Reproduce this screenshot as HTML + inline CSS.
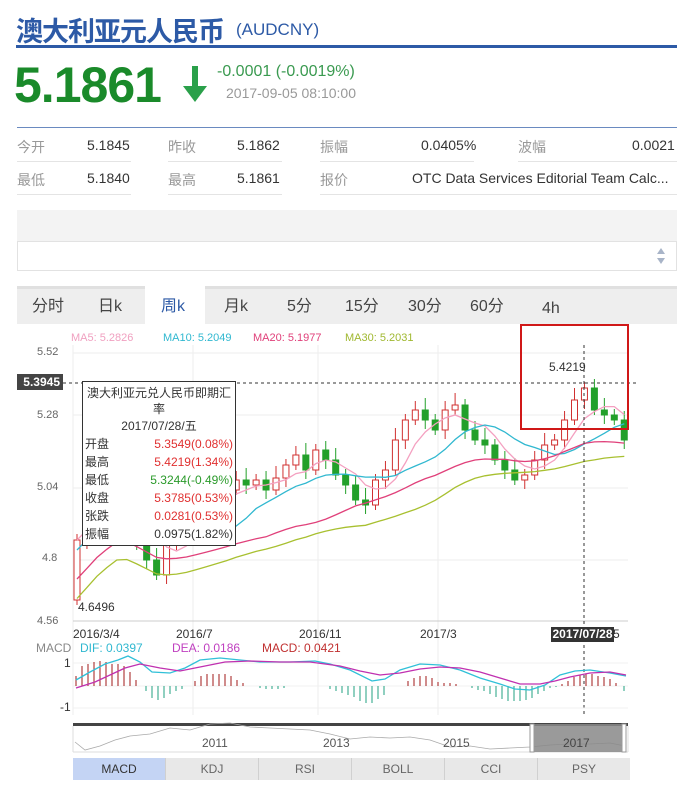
<!DOCTYPE html>
<html><head><meta charset="utf-8"><style>
*{margin:0;padding:0;box-sizing:border-box}
body{width:677px;height:789px;background:#fff;font-family:"Liberation Sans","Noto Sans CJK SC",sans-serif;position:relative;overflow:hidden;color:#333}
.a{position:absolute;white-space:nowrap}
.lab{color:#999;font-size:14px}
.val{color:#333;font-size:14px}
.t{font-size:16px;color:#444;line-height:20px}
</style></head><body>
<div class="a" style="left:16px;top:10px;font-size:27px;font-weight:bold;color:#2d5aa6;letter-spacing:-1px">澳大利亚元人民币</div>
<div class="a" style="left:236px;top:20px;font-size:17px;color:#2d5aa6">(AUDCNY)</div>
<div class="a" style="left:16px;top:45px;width:661px;height:3px;background:#2d5aa6"></div>
<div class="a" style="left:14px;top:56px;font-size:50px;font-weight:bold;color:#1a8a2a;letter-spacing:-1px">5.1861</div>
<svg class="a" style="left:180px;top:64px" width="30" height="40"><rect x="12" y="2" width="6" height="22" fill="#2aa04a"/><path d="M3 22 L27 22 L15 38 Z" fill="#2aa04a"/></svg>
<div class="a" style="left:217px;top:63px;font-size:16px;color:#3a9a50">-0.0001 (-0.0019%)</div>
<div class="a" style="left:226px;top:85px;font-size:14px;color:#999">2017-09-05 08:10:00</div>
<div class="a" style="left:17px;top:127px;width:660px;height:1px;background:#6a8ac0"></div>
<div class="a lab" style="left:17px;top:137px">今开</div><div class="a val" style="left:87px;top:137px">5.1845</div>
<div class="a lab" style="left:168px;top:137px">昨收</div><div class="a val" style="left:237px;top:137px">5.1862</div>
<div class="a lab" style="left:320px;top:137px">振幅</div><div class="a val" style="left:421px;top:137px">0.0405%</div>
<div class="a lab" style="left:518px;top:137px">波幅</div><div class="a val" style="left:632px;top:137px">0.0021</div>
<div class="a lab" style="left:17px;top:170px">最低</div><div class="a val" style="left:87px;top:170px">5.1840</div>
<div class="a lab" style="left:168px;top:170px">最高</div><div class="a val" style="left:237px;top:170px">5.1861</div>
<div class="a lab" style="left:320px;top:170px">报价</div><div class="a val" style="left:412px;top:170px">OTC Data Services Editorial Team Calc...</div>
<div class="a" style="left:17px;top:161px;width:114px;height:1px;background:#e4e4e4"></div>
<div class="a" style="left:168px;top:161px;width:114px;height:1px;background:#e4e4e4"></div>
<div class="a" style="left:320px;top:161px;width:154px;height:1px;background:#e4e4e4"></div>
<div class="a" style="left:518px;top:161px;width:159px;height:1px;background:#e4e4e4"></div>
<div class="a" style="left:17px;top:194px;width:114px;height:1px;background:#e4e4e4"></div>
<div class="a" style="left:168px;top:194px;width:114px;height:1px;background:#e4e4e4"></div>
<div class="a" style="left:320px;top:194px;width:357px;height:1px;background:#e4e4e4"></div>
<div class="a" style="left:17px;top:210px;width:660px;height:31px;background:#f3f3f3"></div>
<div class="a" style="left:17px;top:241px;width:660px;height:30px;border:1px solid #e2e2e2;background:#fff"></div>
<svg class="a" style="left:654px;top:244px" width="14" height="24"><path d="M3 10 L11 10 L7 4Z M3 14 L11 14 L7 20Z" fill="#a8b4c8"/></svg>
<div class="a" style="left:17px;top:286px;width:660px;height:38px;background:#eeeeee;border-top:3px solid #e0e0e0"></div>
<div class="a" style="left:145px;top:286px;width:60px;height:38px;background:#fff"></div>
<div class="a t" style="left:32px;top:297px">分时</div>
<div class="a t" style="left:98px;top:297px">日k</div>
<div class="a t" style="left:161px;top:297px;color:#2d5aa6">周k</div>
<div class="a t" style="left:224px;top:297px">月k</div>
<div class="a t" style="left:287px;top:297px">5分</div>
<div class="a t" style="left:345px;top:297px">15分</div>
<div class="a t" style="left:408px;top:297px">30分</div>
<div class="a t" style="left:470px;top:297px">60分</div>
<div class="a t" style="left:542px;top:299px">4h</div>
<div class="a" style="left:71px;top:332px;font-size:11px;color:#f0a0c0">MA5: 5.2826</div>
<div class="a" style="left:163px;top:332px;font-size:11px;color:#30b8d0">MA10: 5.2049</div>
<div class="a" style="left:253px;top:332px;font-size:11px;color:#e0407a">MA20: 5.1977</div>
<div class="a" style="left:345px;top:332px;font-size:11px;color:#a0b830">MA30: 5.2031</div>
<div class="a" style="left:37px;top:346px;font-size:11px;color:#666">5.52</div>
<div class="a" style="left:37px;top:409px;font-size:11px;color:#666">5.28</div>
<div class="a" style="left:37px;top:481px;font-size:11px;color:#666">5.04</div>
<div class="a" style="left:42px;top:552px;font-size:11px;color:#666">4.8</div>
<div class="a" style="left:37px;top:615px;font-size:11px;color:#666">4.56</div>
<svg id="ch" class="a" style="left:0;top:0" width="677" height="789"></svg>
<div class="a" style="left:17px;top:374px;width:46px;height:16px;background:#444;color:#fff;font-size:12px;font-weight:bold;text-align:right;padding-right:3px;line-height:16px">5.3945</div>
<div class="a" style="left:549px;top:360px;font-size:12px;color:#333">5.4219</div>
<div class="a" style="left:78px;top:600px;font-size:12px;color:#333">4.6496</div>
<div class="a" style="left:82px;top:381px;width:154px;height:165px;background:#fff;border:1px solid #333;font-size:12px;line-height:18px">
<div style="text-align:center;line-height:16px;margin-top:3px">澳大利亚元兑人民币即期汇<br>率</div>
<div style="text-align:center">2017/07/28/五</div>
<div style="position:relative;height:108px;padding-left:2px">
<div>开盘</div><div>最高</div><div>最低</div><div>收盘</div><div>张跌</div><div>振幅</div>
<div style="position:absolute;right:2px;top:0;text-align:right"><div style="color:#e03030">5.3549(0.08%)</div><div style="color:#e03030">5.4219(1.34%)</div><div style="color:#2a9a2a">5.3244(-0.49%)</div><div style="color:#e03030">5.3785(0.53%)</div><div style="color:#e03030">0.0281(0.53%)</div><div>0.0975(1.82%)</div></div>
</div></div>
<div class="a" style="left:73px;top:627px;font-size:12px;color:#333">2016/3/4</div>
<div class="a" style="left:176px;top:627px;font-size:12px;color:#333">2016/7</div>
<div class="a" style="left:299px;top:627px;font-size:12px;color:#333">2016/11</div>
<div class="a" style="left:420px;top:627px;font-size:12px;color:#333">2017/3</div>
<div class="a" style="left:603px;top:627px;font-size:12px;color:#333">9/5</div>
<div class="a" style="left:551px;top:627px;width:63px;height:15px;background:#333;color:#fff;font-size:12px;font-weight:bold;line-height:15px;text-align:center">2017/07/28</div>
<div class="a" style="left:36px;top:641px;font-size:12px;color:#888">MACD</div>
<div class="a" style="left:80px;top:641px;font-size:12px;color:#30b8d0">DIF: 0.0397</div>
<div class="a" style="left:172px;top:641px;font-size:12px;color:#c040c0">DEA: 0.0186</div>
<div class="a" style="left:262px;top:641px;font-size:12px;color:#c03030">MACD: 0.0421</div>
<div class="a" style="left:64px;top:656px;font-size:12px;color:#333">1</div>
<div class="a" style="left:60px;top:700px;font-size:12px;color:#333">-1</div>
<div class="a" style="left:202px;top:736px;font-size:12px;color:#555">2011</div>
<div class="a" style="left:323px;top:736px;font-size:12px;color:#555">2013</div>
<div class="a" style="left:443px;top:736px;font-size:12px;color:#555">2015</div>
<div class="a" style="left:563px;top:736px;font-size:12px;color:#444">2017</div>
<div class="a" style="left:73px;top:758px;width:557px;height:22px;display:flex;font-size:12px;color:#666;line-height:22px;text-align:center">
<div style="flex:1;background:#c4d4f4;color:#333">MACD</div><div style="flex:1;background:#e8e8e8;border-left:1px solid #d0d0d0">KDJ</div><div style="flex:1;background:#e8e8e8;border-left:1px solid #d0d0d0">RSI</div><div style="flex:1;background:#e8e8e8;border-left:1px solid #d0d0d0">BOLL</div><div style="flex:1;background:#e8e8e8;border-left:1px solid #d0d0d0">CCI</div><div style="flex:1;background:#e8e8e8;border-left:1px solid #d0d0d0">PSY</div></div>
<script>
(function(){
var s=document.getElementById('ch'),h='';
function L(x1,y1,x2,y2,c,w,d){h+='<line x1="'+x1+'" y1="'+y1+'" x2="'+x2+'" y2="'+y2+'" stroke="'+c+'" stroke-width="'+(w||1)+'"'+(d?' stroke-dasharray="'+d+'"':'')+'/>';}
[353,415,488,560,621].forEach(function(y){L(73,y,628,y,'#eee')});
[73,193,318,438].forEach(function(x){L(x,345,x,715,'#eee')});
L(73,621,628,621,'#ccc');
var c=[540,520,500,490,480,510,545,560,575,545,530,520,505,500,495,490,480,485,480,490,478,465,455,470,450,460,475,485,500,505,480,470,440,420,410,420,430,410,405,430,440,445,460,470,480,475,460,445,440,420,400,388,410,415,420,440];
var X=function(i){return 77+i*9.95},prev=600;
for(var i=0;i<c.length;i++){var o=prev,cl=c[i],x=X(i),up=cl<o,ty=Math.min(o,cl),bh=Math.max(2,Math.abs(o-cl)),col=up?'#d03030':'#22a02a';
L(x,ty-6-(i%3)*3,x,ty+bh+5+(i%2)*4,col);
h+='<rect x="'+(x-3)+'" y="'+ty+'" width="6" height="'+bh+'" fill="'+(up?'#fff':col)+'" stroke="'+col+'"/>';prev=cl;}
function sm(n,off){var p=[];for(var i=0;i<c.length;i++){var a=0,k=0;for(var j=Math.max(0,i-n+1);j<=i;j++){a+=c[j];k++}p.push(X(i).toFixed(1)+','+(a/k+off*(1-Math.min(1,i/40))+(n>=20?off*0.3:0)).toFixed(1))}return p.join(' ')}
h+='<polyline points="'+sm(5,0)+'" fill="none" stroke="#f4a0c0" stroke-width="1.3"/>';
h+='<polyline points="'+sm(10,10)+'" fill="none" stroke="#30b8d0" stroke-width="1.3"/>';
h+='<polyline points="'+sm(20,30)+'" fill="none" stroke="#e0407a" stroke-width="1.3"/>';
h+='<polyline points="'+sm(30,45)+'" fill="none" stroke="#a8c030" stroke-width="1.3"/>';
L(63,383,636,383,'#333',1,'3,3');L(584,345,584,715,'#333',1,'3,3');
h+='<rect x="521" y="325" width="107" height="104" fill="none" stroke="#d01818" stroke-width="2"/>';
L(73,686,628,686,'#f0f0f0');L(73,663,628,663,'#f0f0f0');L(73,708,628,708,'#f0f0f0');
var bars=[[76,10],[82,20],[88,22],[94,24],[100,25],[106,24],[112,22],[118,22],[124,20],[130,14],[136,6],[146,-5],[152,-12],[158,-14],[164,-12],[170,-8],[176,-5],[182,-3],[195,5],[201,10],[207,12],[213,12],[219,12],[225,12],[231,10],[237,6],[243,3],[260,-2],[266,-3],[272,-3],[278,-3],[284,-2],[330,-3],[336,-5],[342,-7],[348,-9],[354,-11],[360,-15],[366,-17],[372,-17],[378,-13],[384,-9],[408,5],[414,8],[420,10],[426,10],[432,8],[438,4],[444,3],[450,3],[456,2],[472,-2],[478,-4],[484,-5],[490,-8],[496,-11],[502,-13],[508,-15],[514,-15],[520,-15],[526,-14],[532,-12],[538,-8],[544,-5],[550,-2],[556,-1],[562,2],[568,5],[574,9],[580,11],[586,12],[592,12],[598,10],[604,9],[610,7],[616,3],[624,-5]];
bars.forEach(function(b){L(b[0],686,b[0],686-b[1],b[1]>0?'#a01818':'#20a080')});
h+='<polyline points="76,680 90,672 105,664 118,660 128,656 140,662 152,672 170,673 185,668 200,660 220,658 240,660 260,662 290,662 315,661 330,664 350,670 372,681 385,679 400,670 420,664 440,665 460,670 480,678 500,684 515,689 530,690 545,685 560,675 575,671 590,670 610,673 626,676" fill="none" stroke="#30c0d8" stroke-width="1.3"/>';
h+='<polyline points="76,688 95,682 110,675 125,668 140,664 160,668 180,671 200,667 225,662 250,661 280,662 310,662 340,666 360,671 380,675 400,673 420,669 440,667 460,668 480,672 500,678 520,684 540,684 555,681 570,677 590,673 610,672 626,675" fill="none" stroke="#c030b0" stroke-width="1.3"/>';
h+='<rect x="73" y="723" width="555" height="3" fill="#444"/>';
L(73,726,73,752,'#ddd');L(628,726,628,752,'#ddd');L(73,752,628,752,'#ddd');
h+='<polyline points="75,742 85,750 100,746 115,740 130,736 150,734 170,728 190,730 210,724 230,723 250,727 270,728 290,729 310,730 330,734 350,739 370,737 390,738 410,737 430,740 450,747 470,746 490,749 510,748 530,747 550,745 570,744 590,744 610,743 625,746" fill="none" stroke="#aaa" stroke-width="0.8"/>';
h+='<rect x="534" y="724" width="88" height="28" fill="#888" opacity="0.85"/>';
h+='<rect x="530" y="724" width="4" height="28" fill="#fff" stroke="#999"/><rect x="622" y="724" width="4" height="28" fill="#fff" stroke="#999"/>';
s.innerHTML=h;
})();
</script>
</body></html>
